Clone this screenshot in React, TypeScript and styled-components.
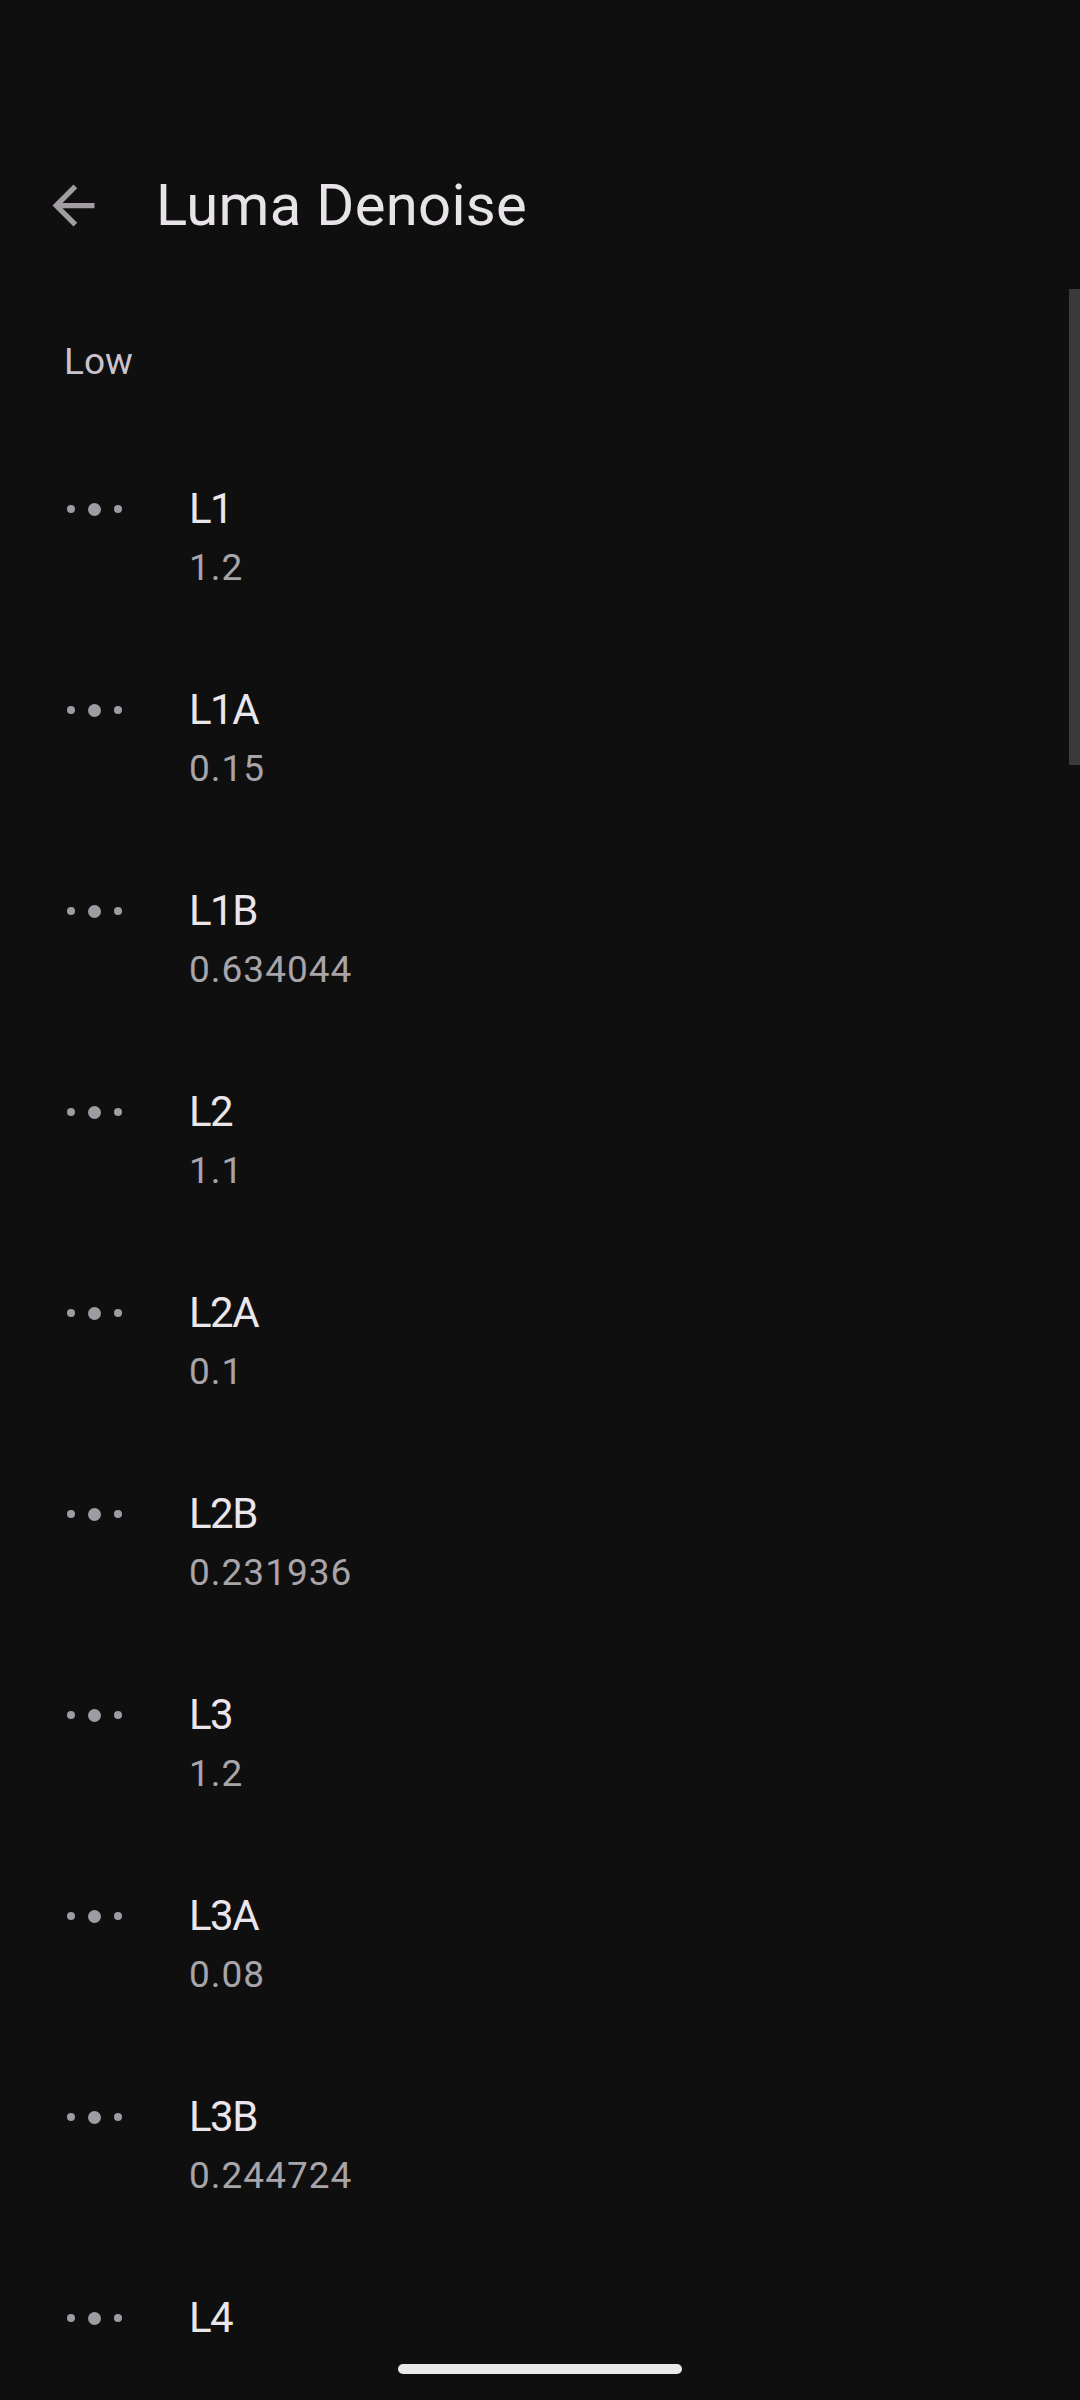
import styled, { createGlobalStyle } from 'styled-components';

type Setting = {
  name: string;
  value?: string;
};

const settings: Setting[] = [
  { name: 'L1', value: '1.2' },
  { name: 'L1A', value: '0.15' },
  { name: 'L1B', value: '0.634044' },
  { name: 'L2', value: '1.1' },
  { name: 'L2A', value: '0.1' },
  { name: 'L2B', value: '0.231936' },
  { name: 'L3', value: '1.2' },
  { name: 'L3A', value: '0.08' },
  { name: 'L3B', value: '0.244724' },
  { name: 'L4' },
];

const GlobalStyle = createGlobalStyle`
  html, body {
    margin: 0;
    padding: 0;
    background: #0f0f0f;
  }
  * {
    box-sizing: border-box;
  }
`;

const BackArrow = () => (
  <svg width="63" height="63" viewBox="0 -960 960 960" fill="#a19da3">
    <path d="M313-440l224 224-57 56-320-320 320-320 57 56-224 224h487v80H313Z" />
  </svg>
);

const SettingRow = ({ name, value }: Setting) => (
  <Row>
    <Dots>
      <Dot />
      <Dot $big />
      <Dot />
    </Dots>
    <div>
      <RowTitle>{name}</RowTitle>
      {value && <RowValue>{value}</RowValue>}
    </div>
  </Row>
);

export default function App() {
  return (
    <>
      <GlobalStyle />
      <Screen>
        <Header>
          <BackButton>
            <BackArrow />
          </BackButton>
          <Title>Luma Denoise</Title>
        </Header>
        <ScrollArea>
          <SectionLabel>Low</SectionLabel>
          <List>
            {settings.map((s) => (
              <SettingRow key={s.name} name={s.name} value={s.value} />
            ))}
          </List>
          <Scrollbar />
        </ScrollArea>
        <NavHandle />
      </Screen>
    </>
  );
}

const Screen = styled.div`
  position: relative;
  width: 1080px;
  height: 2400px;
  overflow: hidden;
  background: #0f0f0f;
  font-family: Roboto, 'Noto Sans', sans-serif;
  display: flex;
  flex-direction: column;
`;

const Header = styled.div`
  display: flex;
  align-items: center;
  height: 80px;
  margin-top: 165px;
  padding-left: 42px;
`;

const BackButton = styled.div`
  width: 63px;
  height: 63px;
  display: flex;
  align-items: center;
  justify-content: center;
`;

const Title = styled.div`
  margin-left: 51px;
  font-size: 58px;
  line-height: 80px;
  letter-spacing: 0.3px;
  color: #e8e3e8;
`;

const ScrollArea = styled.div`
  position: relative;
  height: 2100px;
  overflow: hidden;
`;

const SectionLabel = styled.div`
  margin-top: 92px;
  padding-left: 64px;
  font-size: 37px;
  line-height: 50px;
  color: #c9c3cd;
`;

const List = styled.div`
  display: flex;
  flex-direction: column;
  margin-top: 50px;
`;

const Row = styled.div`
  display: flex;
  align-items: flex-start;
  gap: 67px;
  height: 201px;
  padding: 44px 0 0 67px;
`;

const Dots = styled.div`
  display: flex;
  align-items: center;
  gap: 13px;
  height: 56px;
`;

const Dot = styled.span<{ $big?: boolean }>`
  width: ${(p) => (p.$big ? '13px' : '8px')};
  height: ${(p) => (p.$big ? '13px' : '8px')};
  border-radius: 50%;
  background: #a09ba2;
`;

const RowTitle = styled.div`
  font-size: 42px;
  line-height: 56px;
  letter-spacing: -1.5px;
  color: #ebe6eb;
`;

const RowValue = styled.div`
  margin-top: 6px;
  font-size: 37px;
  line-height: 50px;
  letter-spacing: 1px;
  color: #a8a4a9;
`;

const Scrollbar = styled.div`
  position: absolute;
  top: 44px;
  right: 0;
  width: 11px;
  height: 476px;
  background: #3a393b;
`;

const NavHandle = styled.div`
  position: absolute;
  left: 398px;
  bottom: 26px;
  width: 284px;
  height: 10px;
  border-radius: 5px;
  background: #e9e9e9;
`;
